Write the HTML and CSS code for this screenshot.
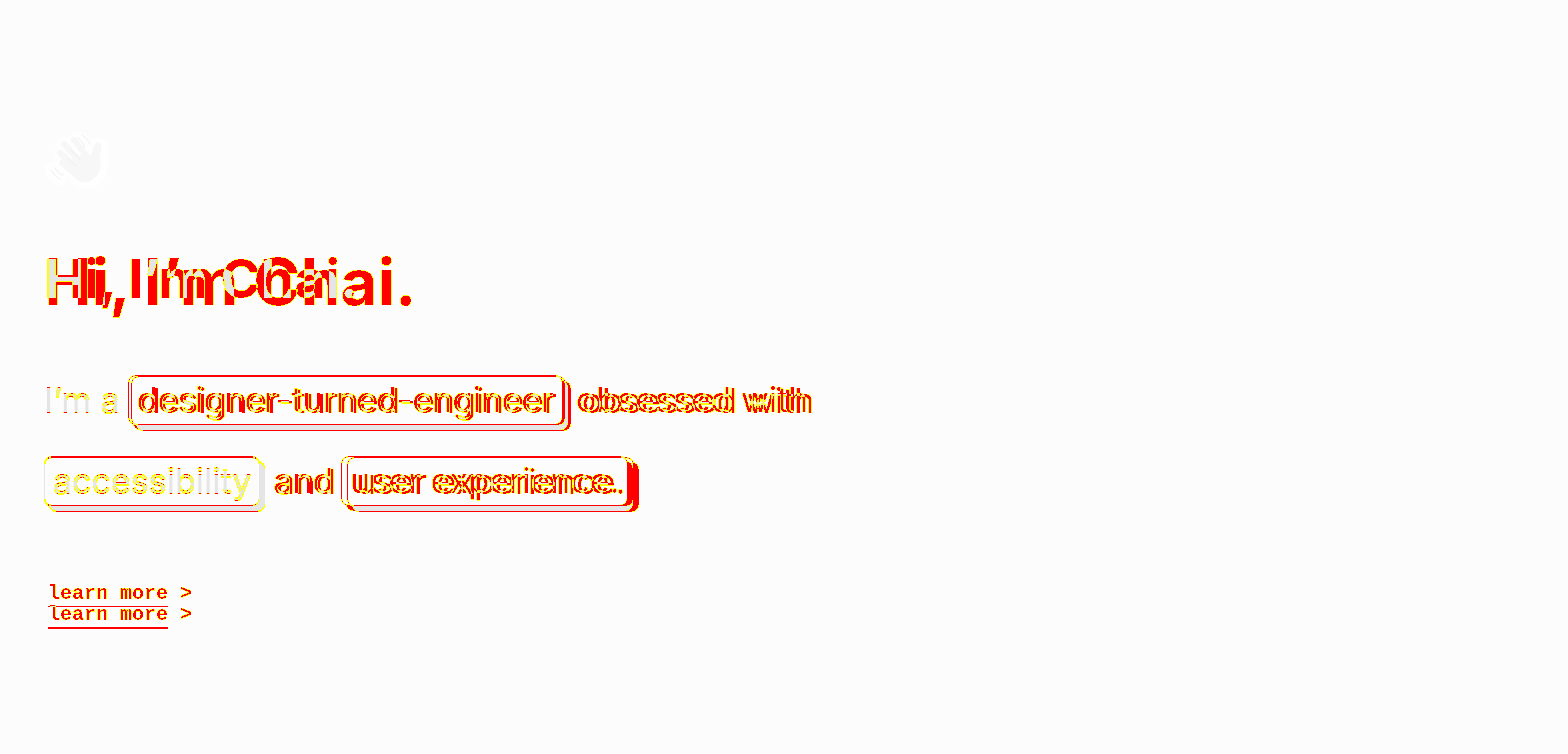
FILE: index.html
```html
<!DOCTYPE html>
<html lang="en">
<head>
<meta charset="utf-8">
<title>Hi, I’m Chai.</title>
<link rel="stylesheet" href="styles.css">
</head>
<body>
<svg class="defs" width="0" height="0" aria-hidden="true">
  <!-- Red channel: difference of the layers. Blue channel: coverage of the first layer. -->
  <filter id="diff" x="0" y="0" width="100%" height="100%" color-interpolation-filters="sRGB">
    <feColorMatrix in="SourceGraphic" values="0 0 -.09 0 .988  0 0 -.09 0 .988  0 0 -.09 0 .988  0 0 0 0 1" result="ghost"/>
    <feColorMatrix in="SourceGraphic" values="1 0 0 0 0  1 0 0 0 0  0 0 0 0 0  0 0 0 0 1"/>
    <feComponentTransfer>
      <feFuncR type="discrete" tableValues="0 1 1 1 1 1 1 1 1 1"/>
      <feFuncG type="discrete" tableValues="1 1 1 1 0"/>
    </feComponentTransfer>
    <feColorMatrix values="0 0 0 0 1  0 1 0 0 0  0 0 0 0 0  1 0 0 0 0" result="marks"/>
    <feMerge><feMergeNode in="ghost"/><feMergeNode in="marks"/></feMerge>
  </filter>
</svg>
<main class="page">
  <svg class="wave" viewBox="0 0 64 64" role="img" aria-label="Waving hand">
    <g class="halo">
      <path d="M18 38 34 48M17 26 36 43M18 16 38 36M28 14 44 33M34 10q5 4 7 9M7 42q4 7 9 9"/>
      <path d="M18 35 42 31 47 29Q49 26 50 20Q52 14 57 18Q59 20 56 28Q59 49 48 52Q40 57 33 51Z"/>
    </g>
    <g class="hand">
      <path d="M18 35 34 48M16 25 36 43M20 16 38 36M30 12 45 31" stroke-width="6"/>
      <path d="M22 34 38 27 44 29Q49 28 50 20Q52 13 56 16Q58 18 55 27Q58 42 51 49Q41 58 31 50Z"/>
    </g>
    <path class="motion" d="M34 10q5 4 7 9M38 7q6 4 8 9M7 42q4 7 9 9M11 40q3 6 8 7M24 31 32 38M27 22 36 32"/>
  </svg>
  <div class="compare">
    <section class="layer before">
      <h1>Hi, I’m Chai.</h1>
      <div class="intro">
        <p class="row"><span>I’m a</span><span class="tag">designer-turned-engineer</span><span>obsessed with</span></p>
        <p class="row"><span class="tag">accessibility</span><span>and</span><span class="tag">user experience.</span></p>
      </div>
      <p class="more"><a href="#about">learn more</a> &gt;</p>
    </section>
    <section class="layer after">
      <h1>Hi, I’m Chai.</h1>
      <div class="intro">
        <p class="row"><span>I’m a</span><span class="tag">designer-turned-engineer</span><span>obsessed with</span></p>
        <p class="row"><span class="tag">accessibility</span><span>and</span><span class="tag">user experience.</span></p>
      </div>
      <p class="more"><a href="#about">learn more</a> &gt;</p>
    </section>
  </div>
</main>
</body>
</html>
```
FILE: styles.css
```css
* { box-sizing: border-box; }
body { margin: 0; background: #fcfcfc; font-family: Inter, sans-serif; }
.defs { position: absolute; }
.page { padding: 128px 0 0 44px; }
.wave { display: block; width: 64px; height: 64px; margin-bottom: 48px; overflow: visible; }
.wave path { stroke-linecap: round; stroke-linejoin: round; }
.halo { fill: #fefefe; stroke: #fefefe; stroke-width: 12; filter: drop-shadow(0 0 2px #fff); }
.hand { fill: #f7f7f7; stroke: #f7f7f7; }
.motion { fill: none; stroke: #eeeeee; stroke-width: 1; }

.compare { display: grid; background: #000; isolation: isolate; filter: url(#diff); }
.layer { grid-area: 1 / 1; color: var(--ink); background: #000; mix-blend-mode: difference; }
.before { --ink: #f0f; --gap: 8px; }
.after { --ink: #f00; --gap: 11px; }

h1 { margin: 0; font-weight: 700; }
.before h1 { font-size: 54px; line-height: 78px; }
.after h1 { font-size: 64px; line-height: 84px; }
.intro { display: flex; flex-direction: column; gap: 31px; }
.before .intro { padding-top: 57px; }
.after .intro { padding-top: 52px; }
.row { display: flex; align-items: center; gap: var(--gap); margin: 0; font-size: 34px; line-height: 48px; font-weight: 400; white-space: nowrap; }
.tag { margin-right: 5px; padding: 0 8px; border: 1px solid var(--ink); border-radius: 8px; background: #000; box-shadow: 5px 5px 0 var(--ink); }
.more { margin: 0; padding: 76px 0 48px 4px; font: bold 20px/24px "Liberation Mono", monospace; }
.after .more { padding-top: 96px; }
.more a { display: inline-block; color: inherit; text-decoration: none; border-bottom: 1px solid var(--ink); }
.after .more a { border-bottom-width: 2px; }
```
